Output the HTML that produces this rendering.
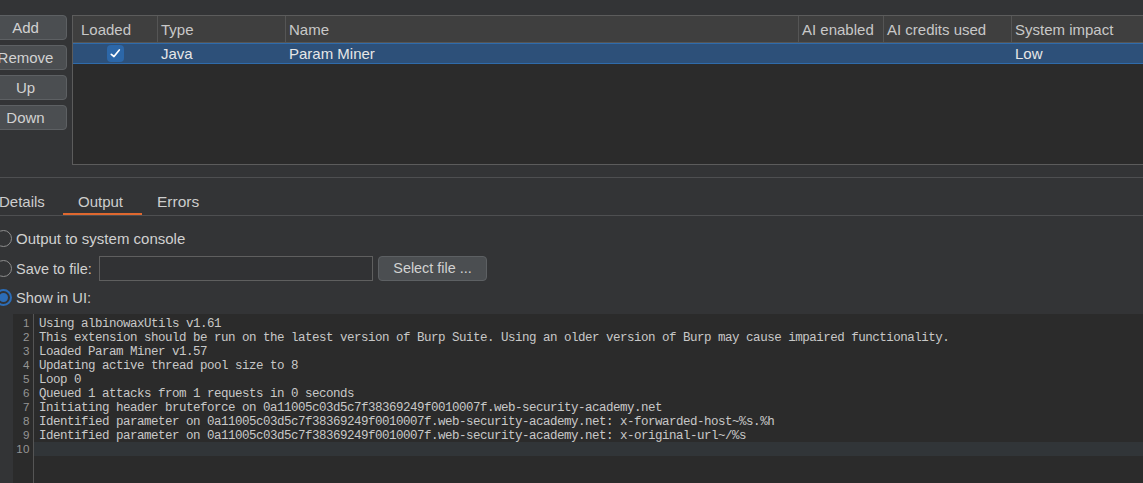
<!DOCTYPE html>
<html><head><meta charset="utf-8">
<style>
*{box-sizing:border-box;margin:0;padding:0}
html,body{width:1143px;height:483px;overflow:hidden;background:#333436;font-family:"Liberation Sans",sans-serif;font-size:15px;color:#cfcfcf}
.abs{position:absolute}
.btn{position:absolute;left:-16px;width:83px;height:25px;background:#4b4e51;border:1px solid #5d6063;border-radius:4px;text-align:center;line-height:23px;color:#d2d2d2}
.tbl{position:absolute;left:72px;top:15px;width:1100px;height:150px;background:#2b2b2b;border:1px solid #5c5c5c}
.hdr{position:absolute;left:0;top:0;right:0;height:27px;background:#3f3f3f;border-bottom:1px solid #555}
.hc{position:absolute;top:0;height:26px;line-height:27px;padding-left:0;color:#c8c8c8}
.sep{position:absolute;top:0;width:1px;height:26px;background:#555}
.row{position:absolute;left:0;right:0;top:27px;height:21px;background:#2d5079;border-top:1px solid #2f6bab;border-bottom:1px solid #2f6bab}
.rc{position:absolute;top:0;line-height:19px;color:#e6e6e6}
.chk{position:absolute;left:34px;top:1px;width:17px;height:17px;background:#2c67a8;border-radius:4px}
.hline{position:absolute;left:0;width:1143px;height:1px;background:#4e4f51}
.tab{position:absolute;top:187px;line-height:30px;color:#cdcdcd}
.radio{position:absolute;left:-5px;width:17px;height:17px;border:1.3px solid #8e8e8e;border-radius:50%}
.rl{position:absolute;left:16px;color:#d0d0d0}
.ta{position:absolute;left:13px;top:314px;width:1130px;height:169px;background:#2b2b2b}
.gut{position:absolute;left:0;top:0;width:20px;height:169px;background:#2b2b2b}
.gl{position:absolute;left:20px;top:0;width:1px;height:169px;background:#555}
.ln{position:absolute;left:0;width:16.9px;letter-spacing:0.4px;text-align:right;font-family:"Liberation Sans",sans-serif;font-size:11.6px;line-height:14px;color:#959595}
.code{position:absolute;left:26px;top:3px;font-family:"Liberation Mono",monospace;font-size:12.5px;letter-spacing:-0.5px;line-height:14px;color:#c8c8c8;white-space:pre}
.cur{position:absolute;left:21px;top:128px;width:1109px;height:14px;background:#313538}
</style></head><body>
<div class="btn" style="top:15px">Add</div>
<div class="btn" style="top:45px">Remove</div>
<div class="btn" style="top:75px">Up</div>
<div class="btn" style="top:105px">Down</div>

<div class="tbl">
 <div class="hdr">
  <div class="hc" style="left:8px">Loaded</div>
  <div class="sep" style="left:84px"></div>
  <div class="hc" style="left:88px">Type</div>
  <div class="sep" style="left:212px"></div>
  <div class="hc" style="left:216px">Name</div>
  <div class="sep" style="left:725px"></div>
  <div class="hc" style="left:729px">AI enabled</div>
  <div class="sep" style="left:810px"></div>
  <div class="hc" style="left:814px">AI credits used</div>
  <div class="sep" style="left:938px"></div>
  <div class="hc" style="left:942px">System impact</div>
 </div>
 <div class="row">
  <div class="chk"><svg width="17" height="17" viewBox="0 0 17 17"><path d="M4.3 9.3 L7 11.5 L12.3 5" fill="none" stroke="#fff" stroke-width="1.7" stroke-linecap="round" stroke-linejoin="round"/></svg></div>
  <div class="rc" style="left:88px">Java</div>
  <div class="rc" style="left:216px">Param Miner</div>
  <div class="rc" style="left:942px">Low</div>
 </div>
</div>

<div class="hline" style="top:177px"></div>
<div class="tab" style="left:-1px">Details</div>
<div class="tab" style="left:78px">Output</div>
<div class="tab" style="left:157px;font-size:15.5px">Errors</div>
<div class="abs" style="left:63px;top:213px;width:79px;height:2px;background:#e0682f"></div>
<div class="hline" style="top:215px"></div>

<div class="radio" style="top:230px"></div>
<div class="rl" style="top:229px;line-height:20px">Output to system console</div>
<div class="radio" style="top:260px"></div>
<div class="rl" style="top:259px;line-height:20px;font-size:14.5px">Save to file:</div>
<div class="abs" style="left:99px;top:256px;width:274px;height:25px;border:1px solid #5f5f5f;background:#313234"></div>
<div class="btn" style="left:378px;top:256px;width:109px;height:25px;font-size:14.4px">Select file ...</div>
<div class="radio" style="top:289px;border:2px solid #2c6db8"><div style="position:absolute;left:2px;top:2px;width:9px;height:9px;border-radius:50%;background:#2c6db8"></div></div>
<div class="rl" style="top:288px;line-height:20px;font-size:14.7px">Show in UI:</div>

<div class="ta">
 <div class="cur"></div>
 <div class="gl"></div>
 <div class="ln" style="top:2px">1<br>2<br>3<br>4<br>5<br>6<br>7<br>8<br>9<br>10</div>
 <div class="code">Using albinowaxUtils v1.61
This extension should be run on the latest version of Burp Suite. Using an older version of Burp may cause impaired functionality.
Loaded Param Miner v1.57
Updating active thread pool size to 8
Loop 0
Queued 1 attacks from 1 requests in 0 seconds
Initiating header bruteforce on 0a11005c03d5c7f38369249f0010007f.web-security-academy.net
Identified parameter on 0a11005c03d5c7f38369249f0010007f.web-security-academy.net: x-forwarded-host~%s.%h
Identified parameter on 0a11005c03d5c7f38369249f0010007f.web-security-academy.net: x-original-url~/%s
</div>
</div>
</body></html>
